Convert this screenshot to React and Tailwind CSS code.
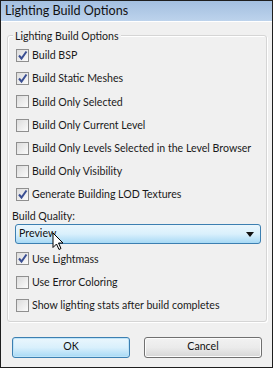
import React from "react";

const font = { fontFamily: 'Lato, "Liberation Sans", sans-serif' };

function Check({ checked, label }) {
  return (
    <div className="flex items-center h-[23.2px] pl-[8px]">
      <span className="w-[13px] h-[13px] border border-[#8f8f8f] bg-gradient-to-br from-[#dcdcdc] to-[#fbfbfb] flex items-center justify-center shrink-0">
        {checked && (
          <svg width="11" height="11" viewBox="0 0 11 11">
            <path d="M2 5.5 L4.5 8.5 L9.5 1.5" fill="none" stroke="#3a4f93" strokeWidth="2" />
          </svg>
        )}
      </span>
      <span className="ml-[3px] text-[10.6px] leading-none text-[#1a1a1a] whitespace-nowrap">{label}</span>
    </div>
  );
}

export default function App() {
  return (
    <div className="w-[273px] h-[368px] bg-[#1e1e1e] p-[1px]" style={font}>
      <div className="w-full h-full flex flex-col bg-[#f0f0f0]">
        {/* Title bar */}
        <div className="h-[20px] shrink-0 bg-gradient-to-b from-[#a3bfe0] to-[#bdd3ec] flex items-center pl-[4px] text-[12.6px] text-[#111]">
          Lighting Build Options
        </div>
        <div className="h-[1px] bg-white" />

        <div className="pl-[6px] pr-[5px] pt-[13px]">
          {/* Group box */}
          <div className="relative border border-[#d5d5d5] rounded-[3px] shadow-[inset_1px_1px_0_#fff,1px_1px_0_#fff] pt-[8px] pb-[4px]">
            <span className="absolute left-[5px] -top-[8px] px-[2px] bg-[#f0f0f0] text-[10.6px] leading-[16px] text-[#1a1a1a]">
              Lighting Build Options
            </span>
            <Check checked label="Build BSP" />
            <Check checked label="Build Static Meshes" />
            <Check label="Build Only Selected" />
            <Check label="Build Only Current Level" />
            <Check label="Build Only Levels Selected in the Level Browser" />
            <Check label="Build Only Visibility" />
            <Check checked label="Generate Building LOD Textures" />
            <div className="pl-[4px] mt-[2px] h-[16px] text-[10.6px] leading-[16px] text-[#1a1a1a]">Build Quality:</div>
            <div className="ml-[7px] mr-[5px] h-[20px] rounded-[3px] border border-[#3c7fb1] bg-gradient-to-b from-[#eaf6fd] via-[#d9f0fc] to-[#a7d9f5] flex items-center justify-between pl-[3px] pr-[6px] relative">
              <span className="text-[10.6px] text-[#111]">Preview</span>
              <svg width="8" height="5" viewBox="0 0 8 5">
                <path d="M0 0 H8 L4 5 Z" fill="#111" />
              </svg>
              <svg className="absolute left-[36px] top-[7px]" width="13" height="20" viewBox="0 0 13 20">
                <path d="M1 1 L1 15.5 L4.5 12 L7 17.5 L9 16.5 L6.5 11 L11 11 Z" fill="#fff" stroke="#000" strokeWidth="1" strokeLinejoin="round" />
              </svg>
            </div>
            <div className="mt-[3px]">
              <Check checked label="Use Lightmass" />
              <Check label="Use Error Coloring" />
              <Check label="Show lighting stats after build completes" />
            </div>
          </div>

          {/* Buttons */}
          <div className="flex justify-between mt-[15px] pl-[5px] pr-[5px]">
            <button className="w-[118px] h-[21px] rounded-[3px] border border-[#3c7fb1] bg-gradient-to-b from-[#eaf6fd] via-[#d9f0fc] to-[#a7d9f5] shadow-[inset_0_0_0_1px_#bfe4f8] text-[10.6px] text-[#111]">
              OK
            </button>
            <button className="w-[118px] h-[21px] rounded-[3px] border border-[#707070] bg-gradient-to-b from-[#f2f2f2] via-[#ebebeb] to-[#d6d6d6] shadow-[inset_0_0_0_1px_#fcfcfc] text-[10.6px] text-[#111]">
              Cancel
            </button>
          </div>
        </div>
      </div>
    </div>
  );
}
